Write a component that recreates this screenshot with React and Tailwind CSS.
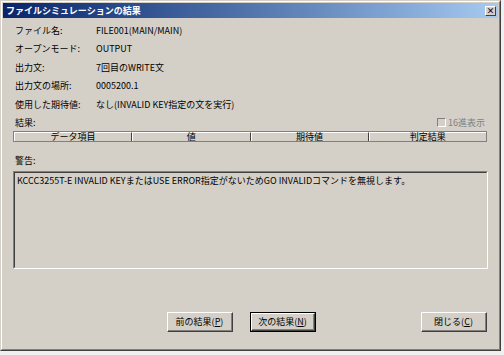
const rows = [
  ["ファイル名:", "FILE001(MAIN/MAIN)"],
  ["オープンモード:", "OUTPUT"],
  ["出力文:", "7回目のWRITE文"],
  ["出力文の場所:", "0005200.1"],
  ["使用した期待値:", "なし(INVALID KEY指定の文を実行)"],
];

const columns = ["データ項目", "値", "期待値", "判定結果"];

function Button({ label, mnemonic, isDefault = false }) {
  return (
    <div className={`w-[66px] h-[20px] ${isDefault ? "border border-black" : ""}`}>
      <div className="h-full border-t border-l border-white border-r border-b border-r-[#404040] border-b-[#404040]">
        <div className="h-full flex items-center justify-center border-r border-b border-[#808080] text-black">
          {label}(<span className="underline">{mnemonic}</span>)
        </div>
      </div>
    </div>
  );
}

export default function App() {
  return (
    <div className="w-[504px] h-[355px] bg-[#f0f0f0] font-['Noto_Sans_CJK_JP',sans-serif] text-[9px] leading-none text-black">
      {/* Window */}
      <div className="w-[501px] h-[351px] flex flex-col bg-[#d4d0c8] border-t border-l border-[#d4d0c8] border-r border-b border-r-[#404040] border-b-[#404040]">
        <div className="flex-1 flex flex-col border-t border-l border-white border-r border-b border-r-[#808080] border-b-[#808080] px-[1px] pt-[1px]">
          {/* Title bar */}
          <div className="h-[15px] flex items-center justify-between pl-[3px] pr-[2px] bg-gradient-to-r from-[#0a246a] to-[#a6caf0]">
            <span className="text-white font-bold text-[9px]">ファイルシミュレーションの結果</span>
            <div className="w-[11px] h-[10px] bg-[#d4d0c8] border-t border-l border-white border-r border-b border-r-[#404040] border-b-[#404040] flex items-center justify-center text-[8px] font-bold leading-none">
              ×
            </div>
          </div>

          {/* Content */}
          <div className="flex-1 flex flex-col px-[10px] pt-[3px]">
            {rows.map(([label, value]) => (
              <div key={label} className="h-[18.5px] flex items-center pl-[2px]">
                <span className="w-[81px] shrink-0">{label}</span>
                <span>{value}</span>
              </div>
            ))}

            <div className="h-[17px] flex items-center justify-between pl-[2px]">
              <span>結果:</span>
              <div className="flex items-center gap-[2px] mr-[3px]">
                <div className="w-[9px] h-[9px] bg-[#d4d0c8] border-t border-l border-[#808080] border-r border-b border-r-white border-b-white" />
                <span className="text-[#808080]">16進表示</span>
              </div>
            </div>

            {/* Table header */}
            <div className="h-[11px] flex border border-[#808080] mr-[1px]">
              {columns.map((c, i) => (
                <div
                  key={c}
                  className={`flex-1 flex items-center justify-center border-t border-l border-white ${
                    i < columns.length - 1 ? "border-r border-r-[#404040]" : ""
                  }`}
                >
                  {c}
                </div>
              ))}
            </div>

            <div className="h-[18px] mt-[10px] flex items-center pl-[2px]">警告:</div>

            {/* Warning box */}
            <div className="h-[98px] mt-[1px] border-t border-l border-[#808080] border-r border-b border-r-white border-b-white">
              <div className="h-full border-t border-l border-[#404040] border-r border-b border-r-[#d4d0c8] border-b-[#d4d0c8] px-[2px] pt-[3px]">
                KCCC3255T-E INVALID KEYまたはUSE ERROR指定がないためGO INVALIDコマンドを無視します。
              </div>
            </div>

            {/* Buttons */}
            <div className="flex items-center mt-[43px] pl-[154px] pr-[1px]">
              <Button label="前の結果" mnemonic="P" />
              <div className="ml-[17px]">
                <Button label="次の結果" mnemonic="N" isDefault />
              </div>
              <div className="ml-auto">
                <Button label="閉じる" mnemonic="C" />
              </div>
            </div>
          </div>
        </div>
      </div>
    </div>
  );
}
